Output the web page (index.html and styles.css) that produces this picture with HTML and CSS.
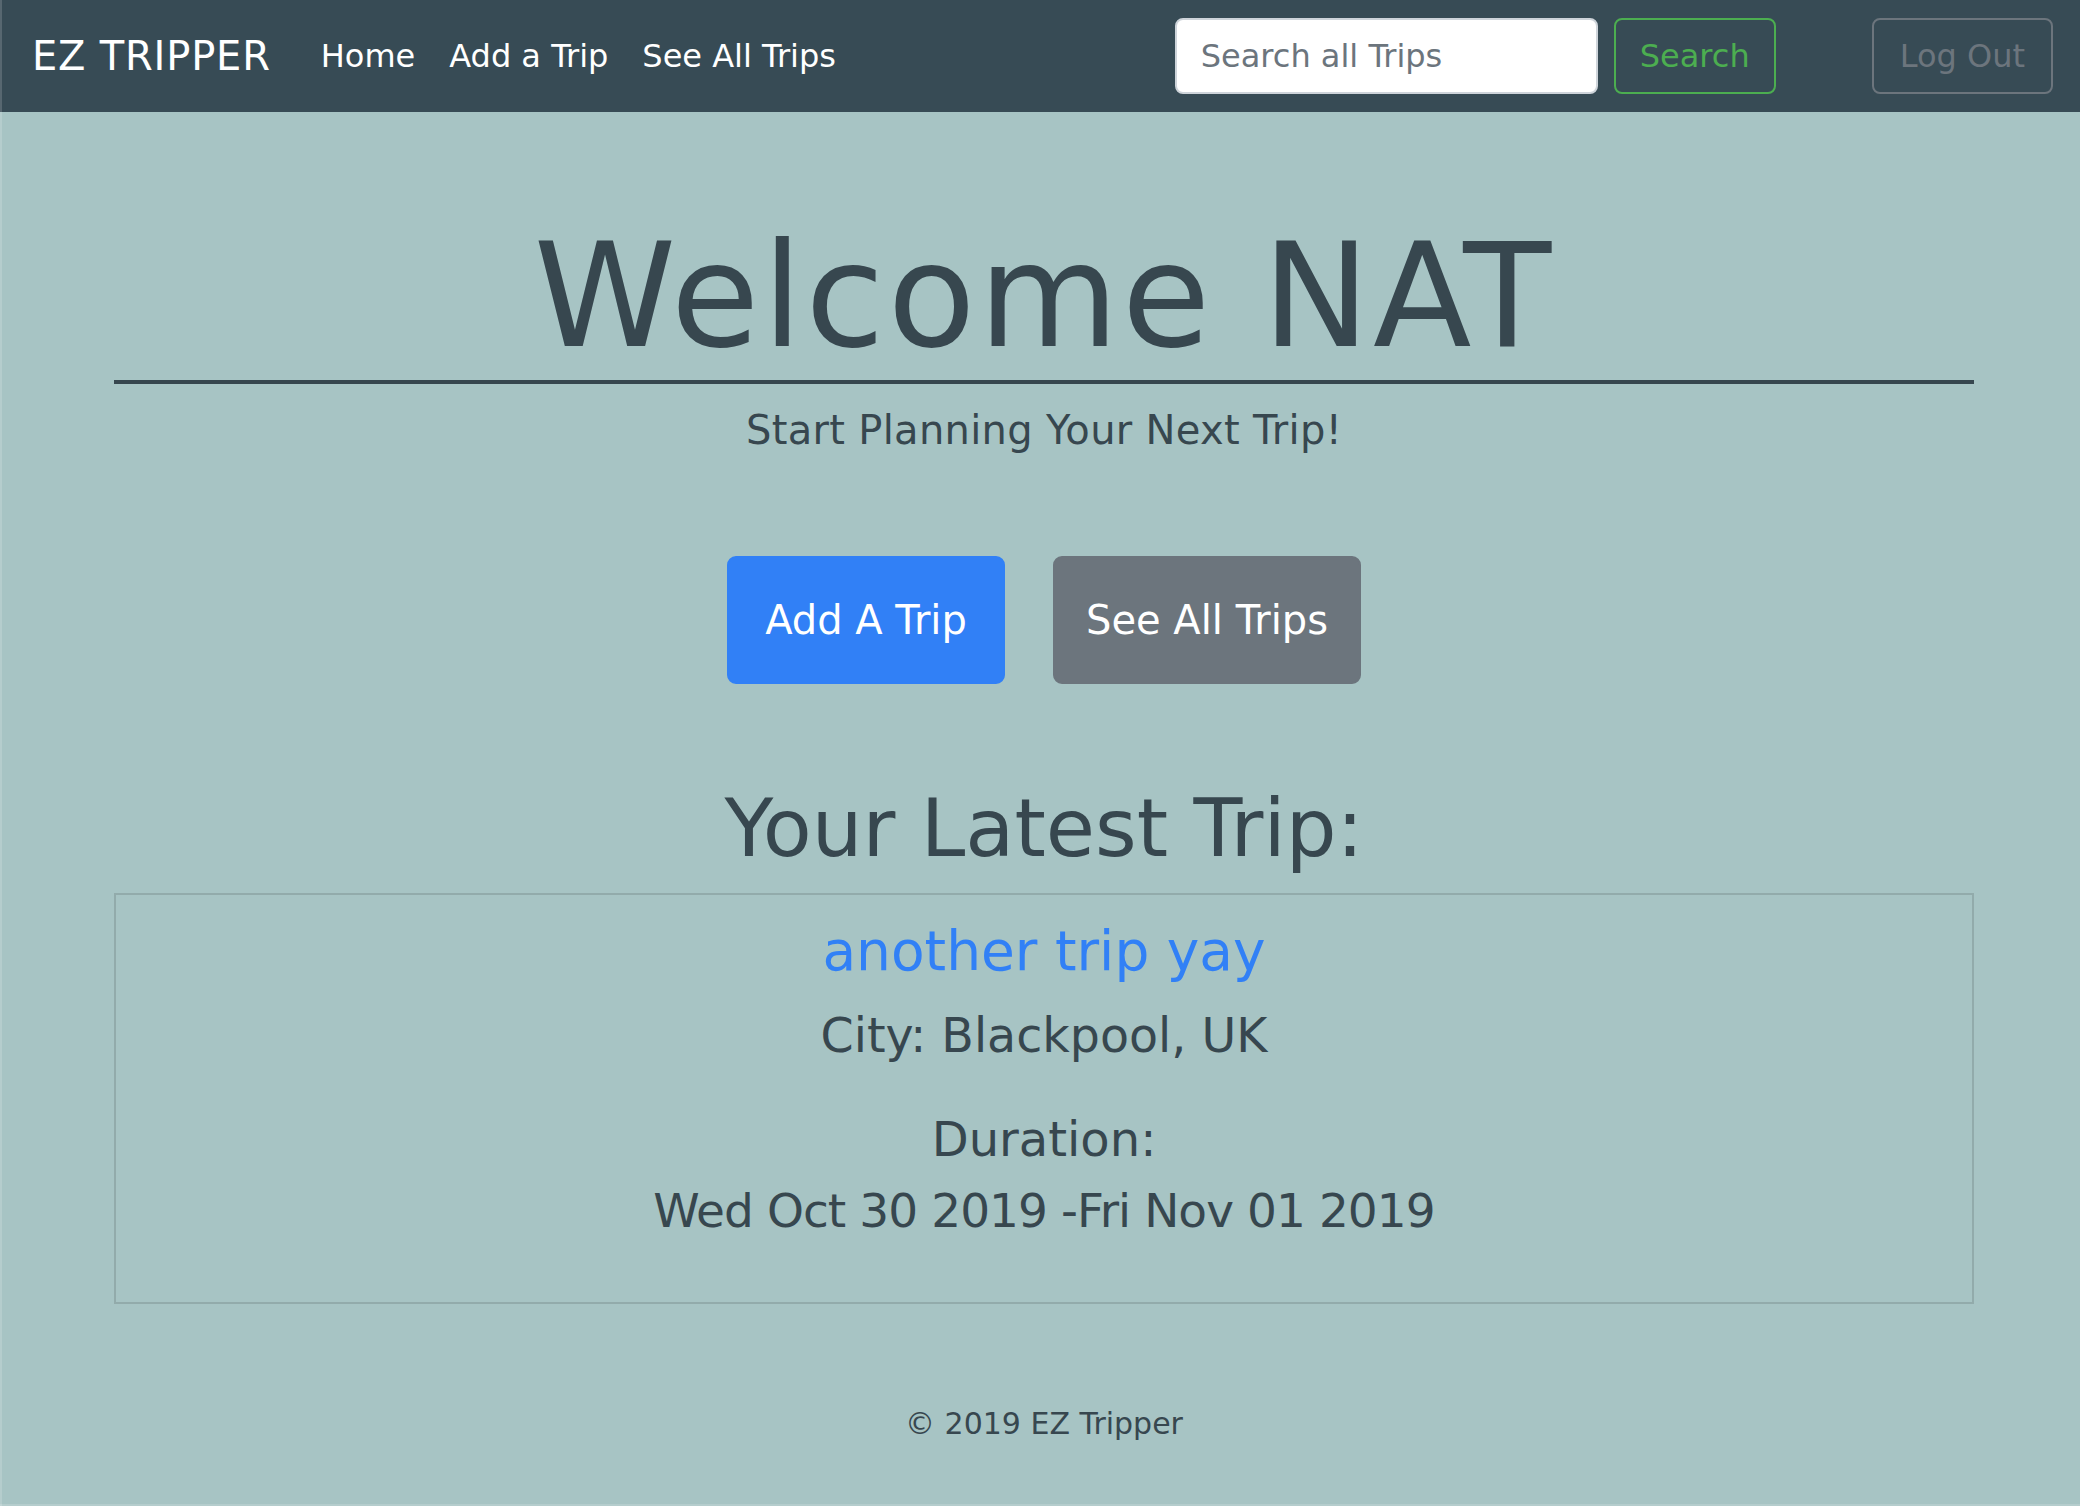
FILE: index.html
```html
<!DOCTYPE html>
<html lang="en">
<head>
<meta charset="utf-8">
<title>EZ Tripper</title>
<link rel="stylesheet" href="styles.css">
</head>
<body>
<nav class="navbar">
  <a class="brand" href="#">EZ TRIPPER</a>
  <ul class="nav-links">
    <li><a class="nav-link" href="#">Home</a></li>
    <li><a class="nav-link" href="#">Add a Trip</a></li>
    <li><a class="nav-link" href="#">See All Trips</a></li>
  </ul>
  <form class="search-form">
    <input class="search-input" type="search" placeholder="Search all Trips">
    <button class="btn btn-outline-success" type="button">Search</button>
  </form>
  <button class="btn btn-outline-secondary logout" type="button">Log Out</button>
</nav>
<main class="main">
  <div class="container">
    <section class="hero">
      <h1 class="welcome">Welcome NAT</h1>
      <hr class="divider">
      <p class="lead">Start Planning Your Next Trip!</p>
      <div class="actions">
        <a class="big-btn big-btn-primary" href="#">Add A Trip</a>
        <a class="big-btn big-btn-secondary" href="#">See All Trips</a>
      </div>
    </section>
    <h2 class="latest-title">Your Latest Trip:</h2>
    <div class="trip-card">
      <h3 class="trip-name"><a href="#">another trip yay</a></h3>
      <h4 class="trip-city">City: Blackpool, UK</h4>
      <h4 class="trip-duration">
        <span class="duration-label">Duration:</span>
        <span class="duration-dates">Wed Oct 30 2019 -Fri Nov 01 2019</span>
      </h4>
    </div>
    <footer class="footer">© 2019 EZ Tripper</footer>
  </div>
</main>
</body>
</html>
```
FILE: styles.css
```css
html {
  background: #a7c4c4;
}
body {
  margin: 0;
  min-height: 1506px;
  background: #a7c4c4;
  color: #37474f;
  font-family: "DejaVu Sans", "Noto Sans", sans-serif;
}
body::before {
  content: "";
  position: fixed;
  left: 0;
  top: 0;
  bottom: 0;
  width: 2px;
  background: rgba(255, 255, 255, 0.16);
  z-index: 10;
}
body::after {
  content: "";
  position: fixed;
  left: 0;
  right: 0;
  bottom: 0;
  height: 2px;
  background: rgba(255, 255, 255, 0.16);
  z-index: 10;
}

/* Navbar */
.navbar {
  display: flex;
  align-items: center;
  height: 112px;
  box-sizing: border-box;
  padding: 16px 27px 16px 32px;
  background: #374b55;
}
.brand {
  font-size: 40px;
  line-height: 60px;
  padding: 10px 0;
  color: #ffffff;
  text-decoration: none;
  letter-spacing: 0.8px;
  margin-right: 33px;
}
.nav-links {
  display: flex;
  list-style: none;
  margin: 0;
  padding: 0;
  flex: 1;
}
.nav-link {
  display: block;
  font-size: 32px;
  line-height: 48px;
  padding: 16px 17px;
  color: #ffffff;
  text-decoration: none;
}
.search-form {
  display: flex;
  align-items: center;
  margin: 0;
}
.search-input {
  width: 423px;
  height: 76px;
  box-sizing: border-box;
  border: 2px solid #ced4da;
  border-radius: 8px;
  padding: 12px 24px;
  font-family: "DejaVu Sans", "Noto Sans", sans-serif;
  font-size: 32px;
  line-height: 48px;
  color: #495057;
  background: #ffffff;
  margin-right: 16px;
  outline: none;
}
.search-input::placeholder {
  color: #6c757d;
}
.btn {
  height: 76px;
  box-sizing: border-box;
  padding: 12px 24px;
  border-radius: 8px;
  font-family: "DejaVu Sans", "Noto Sans", sans-serif;
  font-size: 32px;
  line-height: 48px;
  background: transparent;
  cursor: pointer;
}
.btn-outline-success {
  border: 2px solid #4cae50;
  color: #4cae50;
}
.btn-outline-secondary {
  border: 2px solid #6c757d;
  color: #6c757d;
}
.logout {
  margin-left: 96px;
  padding: 12px 26px;
}

/* Main */
.main {
  padding-left: 8px;
}
.container {
  width: 1860px;
  margin: 0 auto;
  text-align: center;
}
.hero {
  padding-top: 109px;
}
.welcome {
  margin: 0;
  font-size: 144px;
  line-height: 150px;
  font-weight: 400;
  letter-spacing: 3px;
  color: #37474f;
}
.divider {
  margin: 9px 0 0;
  height: 4px;
  border: 0;
  background: #37474f;
}
.lead {
  margin: 16px 0 0;
  font-size: 40px;
  line-height: 60px;
  letter-spacing: 0.3px;
}
.actions {
  display: flex;
  justify-content: center;
  gap: 48px;
  margin-top: 96px;
}
.big-btn {
  display: flex;
  align-items: center;
  justify-content: center;
  height: 128px;
  box-sizing: border-box;
  border-radius: 9px;
  font-size: 40px;
  line-height: 60px;
  color: #ffffff;
  text-decoration: none;
}
.big-btn-primary {
  width: 278px;
  background: #3180f6;
  border: 2px solid #3180f6;
}
.big-btn-secondary {
  width: 308px;
  background: #6c757d;
  border: 2px solid #6c757d;
}
.latest-title {
  margin: 99px 0 0;
  font-size: 80px;
  line-height: 92px;
  font-weight: 400;
}
.trip-card {
  margin-top: 18px;
  border: 2px solid #92abab;
  padding: 23px 20px 55px;
}
.trip-name {
  margin: 0;
  font-size: 55px;
  line-height: 66px;
  font-weight: 400;
}
.trip-name a {
  color: #3180f6;
  text-decoration: none;
}
.trip-city {
  margin: 23px 0 0;
  font-size: 47.5px;
  line-height: 57px;
  font-weight: 400;
}
.trip-duration {
  margin: 39px 0 0;
  font-weight: 400;
}
.duration-label {
  display: block;
  font-size: 48px;
  line-height: 72px;
}
.duration-dates {
  display: block;
  font-size: 47px;
  line-height: 72px;
  letter-spacing: -0.95px;
}
.footer {
  margin-top: 97px;
  font-size: 30px;
  line-height: 45px;
}
```
